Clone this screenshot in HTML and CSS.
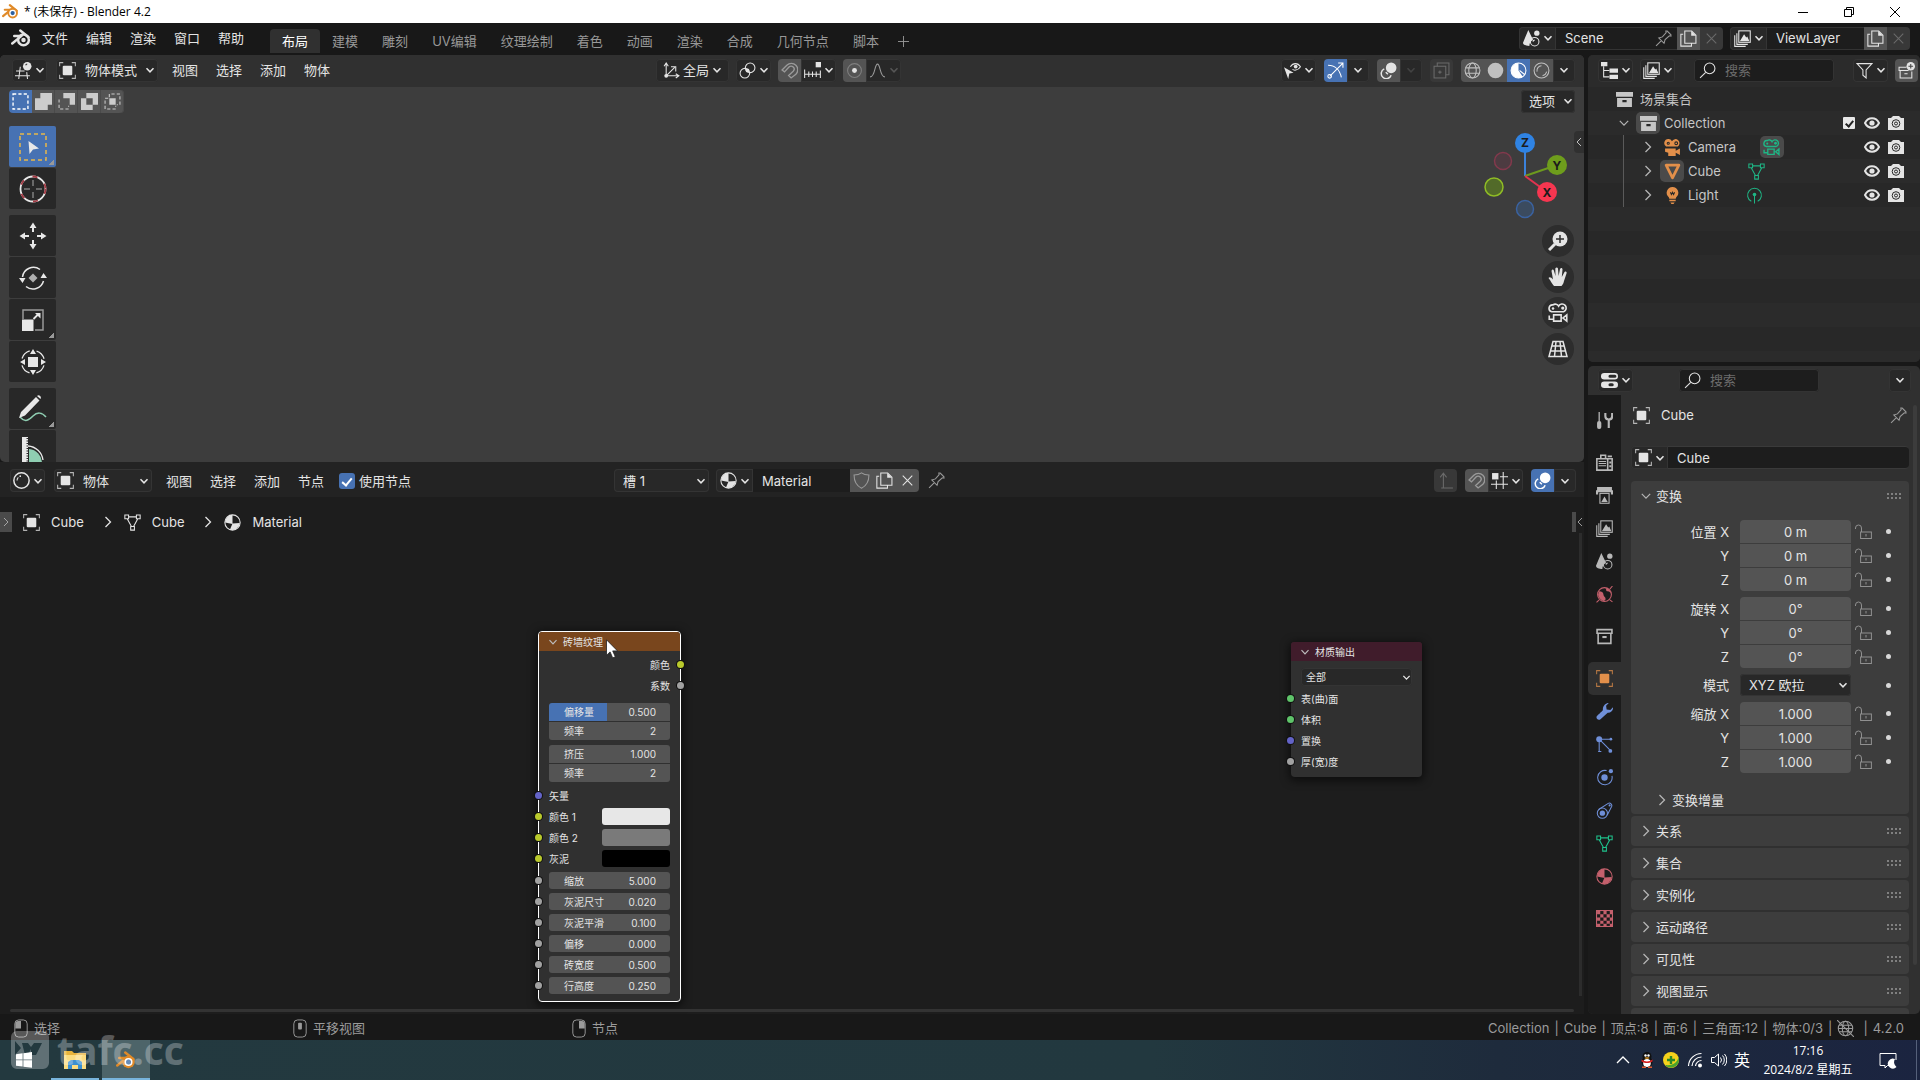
FILE: index.html
```html
<!DOCTYPE html>
<html lang="zh-CN">
<head>
<meta charset="utf-8">
<title>* (未保存) - Blender 4.2</title>
<link rel="stylesheet" href="styles.css">
</head>
<body>
<svg class="sprite" aria-hidden="true">
  <symbol id="logo" viewBox="0 0 16 16"><path d="M1 12.4 8.4 6.3H2.6M7.4 2 14 7.4" fill="none" stroke="currentColor" stroke-width="2" stroke-linecap="round" stroke-linejoin="round"/><circle cx="10" cy="9.5" r="4.3" fill="none" stroke="currentColor" stroke-width="2"/><circle class="f" cx="10" cy="9.5" r="1.8"/></symbol>
  <symbol id="logo-color" viewBox="0 0 16 16"><path d="M1 12.4 8.4 6.3H2.6M7.4 2 14 7.4" fill="none" stroke="#e08a28" stroke-width="2" stroke-linecap="round" stroke-linejoin="round"/><g stroke="none"><circle cx="10" cy="9.5" r="5" fill="#e08a28"/><circle cx="10" cy="9.5" r="3.2" fill="#fff"/><circle cx="10" cy="9.5" r="2" fill="#2c5f9e"/></g></symbol>
  <symbol id="down" viewBox="0 0 10 10"><path d="M1.5 3.2 5 6.8l3.5-3.6"/></symbol>
  <symbol id="right" viewBox="0 0 10 14"><path d="M2.5 2 7.5 7l-5 5"/></symbol>
  <symbol id="left" viewBox="0 0 10 14"><path d="M7.5 2 2.5 7l5 5"/></symbol>
  <symbol id="object" viewBox="0 0 16 16"><path d="M.6 4V.6H4M12 .6h3.4V4M15.4 12v3.4H12M4 15.4H.6V12" opacity=".75"/><rect class="f" x="3.5" y="3.5" width="9" height="9" rx="1"/></symbol>
  <symbol id="view3d" viewBox="0 0 16 16"><path d="M1 8.5h8M0 13h14M5 4.5 3.5 16M11 9.5l.8 6.5"/><circle class="f" cx="11.5" cy="4" r="4"/><path d="M10 3a2 2 0 0 1 1.5-1.2" stroke="#282828"/></symbol>
  <symbol id="shader" viewBox="0 0 16 16"><circle cx="8" cy="8" r="7.2" stroke-width="1.4"/><path d="M3.8 8A4.2 4.2 0 0 1 5 5"/><circle class="f" cx="6.8" cy="3.9" r=".8"/></symbol>
  <symbol id="axes" viewBox="0 0 16 16"><path d="M3 2v11h11M3 13l8-8M1 4l2-3 2 3M12 11l3 2-3 2M7.500 4.500H12V9"/><circle class="f" cx="3" cy="13" r="1.800"/></symbol>
  <symbol id="pivot" viewBox="0 0 16 16"><circle cx="10.500" cy="5.500" r="4.500"/><circle cx="5.500" cy="10.500" r="4.500"/><circle class="f" cx="8" cy="8" r="1.800"/></symbol>
  <symbol id="magnet" viewBox="0 0 16 16"><path d="M1 7.500 5.500 3a6 6 0 0 1 8.500 8.500L9.500 15l-2.300-2.300 4.300-4a2.800 2.800 0 0 0-4-4L3.300 9.300z" stroke-width="1.300"/></symbol>
  <symbol id="snapinc" viewBox="0 0 16 16"><path d="M.6 7v8M15.400 8v7M1 11.500h14M4.500 9v5M8 9v5M11.500 9v5"/><rect class="f" x="11" y="0" width="5" height="5"/></symbol>
  <symbol id="snapgrid" viewBox="0 0 16 16"><path d="M11.500 0v16M5 8v8M8.500 4.500H16M0 11.500h16"/><rect class="f" x="1" y="1" width="6" height="6"/></symbol>
  <symbol id="prop" viewBox="0 0 16 16"><circle cx="8" cy="8" r="6.500" opacity=".3"/><circle class="f" cx="8" cy="8" r="2.300"/></symbol>
  <symbol id="falloff" viewBox="0 0 16 16"><path d="M1 14C6 14 5 2 8 2s2 12 7 12"/></symbol>
  <symbol id="visible" viewBox="0 0 16 16"><path class="f" d="M0 5l9 5-4 .8L4 16z"/><path d="M6 4.500C8.500.5 13 .5 15.500 4.500 13 8.500 9 8 8 6.800"/><circle class="f" cx="11" cy="4.300" r="1.800"/></symbol>
  <symbol id="gizmo" viewBox="0 0 16 16"><path d="M2.500 13.500 15 1M10.500 1H15v4.500M1 3c6 0 11 4 12.500 11.500"/><circle cx="2.500" cy="13.500" r="1.700"/></symbol>
  <symbol id="overlay" viewBox="0 0 16 16"><circle class="f" cx="10.500" cy="5.500" r="5"/><path d="M4 6.500a4.800 4.800 0 1 0 6.500 6M5.500 9.500a5.500 5.500 0 0 0 2 2" stroke-width="1.400"/></symbol>
  <symbol id="xray" viewBox="0 0 16 16"><rect x="1" y="4" width="11" height="11"/><path d="M4 4V1h11v11h-3M5 9.500h3M6.500 8v3"/></symbol>
  <symbol id="wire" viewBox="0 0 16 16"><circle cx="8" cy="8" r="7"/><ellipse cx="8" cy="8" rx="3.500" ry="7"/><path d="M1.500 5.500h13M1.500 10.500h13"/></symbol>
  <symbol id="solid" viewBox="0 0 16 16"><circle class="f" cx="8" cy="8" r="7.300"/></symbol>
  <symbol id="matprev" viewBox="0 0 16 16"><circle cx="8" cy="8" r="7"/><path class="f" d="M8 1a7 7 0 1 0 4 12.800L8 8z"/><path d="M9 8l5 4"/></symbol>
  <symbol id="rendered" viewBox="0 0 16 16"><circle cx="8" cy="8" r="7"/><path d="M3.800 9A4.500 4.500 0 0 1 8 3.500M13 9a6 6 0 0 1-4 4"/></symbol>
  <symbol id="material" viewBox="0 0 16 16"><circle cx="8" cy="8" r="7.200"/><path class="f" d="M8 .8a7.200 7.200 0 0 0-7 7.200l7 1.500zM8 9l6.800-.5a7.200 7.200 0 0 1-9.300 6.300z"/></symbol>
  <symbol id="pin" viewBox="0 0 16 16"><path d="M1 15l5-5M3.500 7.500l5 5 1-3.500 4-3.500 1.500.3V4.500L11.500 1h-1.300l.3 1.500-3.500 4z"/></symbol>
  <symbol id="copy" viewBox="0 0 16 16"><path d="M3 4H.8v11.200h10V13M4.500 1H11l4 4v7.500H4.500z"/><path class="f" d="M10.500 1v4.500H15z"/></symbol>
  <symbol id="close" viewBox="0 0 16 16"><path d="M3.500 3.500l9 9M12.500 3.500l-9 9"/></symbol>
  <symbol id="shield" viewBox="0 0 16 16"><path d="M8 .8c2 1.500 4 2 7 2 0 7-3 10.500-7 12.400C4 13.300 1 9.800 1 2.800c3 0 5-.5 7-2z"/></symbol>
  <symbol id="scene" viewBox="0 0 16 16"><path class="f" d="M5 0l4.500 9.500A6 6 0 0 0 6 15C3 15 0 14 0 12z"/><circle class="f" cx="13" cy="3" r="2.500"/><circle cx="11" cy="11" r="4"/><path d="M9.500 11A1.500 1.500 0 0 1 11 9.500"/></symbol>
  <symbol id="images" viewBox="0 0 16 16"><rect x="4.500" y=".8" width="10.800" height="10.800"/><path d="M2.700 3v10.500H13M.7 5v10.400H11"/><path class="f" d="M5.500 10.500 9.500 4l2 3 1-1 2 4.500z"/></symbol>
  <symbol id="tree" viewBox="0 0 16 16"><path class="f" d="M0 0h6v4H0zM8 6h8v4H8zM8 12h8v4H8z"/><path d="M2.500 4v10H8M2.500 8H8"/></symbol>
  <symbol id="search" viewBox="0 0 16 16"><circle cx="10" cy="6" r="5"/><path d="M6.300 9.700 1 15"/></symbol>
  <symbol id="filter" viewBox="0 0 16 16"><path d="M1 1.500h14l-5.500 6v7.500L6.500 12.500v-5z"/></symbol>
  <symbol id="newcoll" viewBox="0 0 16 16"><path d="M8 5H1v3h9M2 8v7h11V9M6 11h3"/><circle class="f" cx="12" cy="4" r="4"/><path d="M12 1.800v4.400M9.800 4h4.400" stroke="#444"/></symbol>
  <symbol id="coll" viewBox="0 0 16 16"><path class="f" d="M0 1h16v4.500H0zM1 6.500h14V15H1z"/><path d="M6 9.500h4" stroke="#282828" stroke-width="2"/></symbol>
  <symbol id="colllight" viewBox="0 0 16 16"><path d="M1 1.500h14V5H1zM2 5v9.500h12V5" stroke-width="1.500"/><path d="M6 8.500h4" stroke-width="2"/></symbol>
  <symbol id="camera" viewBox="0 0 16 16"><path class="f" d="M4 0a3.800 3.800 0 0 0-2 7h11a3.800 3.800 0 1 0-5.500-5A3.800 3.800 0 0 0 4 0zM3 9h8v2l4-2v6l-4-2v3H4v-3l-3-1V9z"/><circle cx="4" cy="4" r="1" stroke="#282828"/><circle cx="11.500" cy="4" r="1.300" stroke="#282828"/></symbol>
  <symbol id="cameraline" viewBox="0 0 16 16"><path d="M4 1.500a2.800 2.800 0 0 0-1 5.500h9.500a3.200 3.200 0 1 0-4-4.500A3 3 0 0 0 4 1.500zM4.500 9.500h6v5h-6zM15 9.500v5l-3-2.500zM1 10v3h3" stroke-width="1.300"/><circle class="f" cx="4" cy="4.300" r="1"/><circle class="f" cx="11.800" cy="4" r="1.300"/></symbol>
  <symbol id="cone" viewBox="0 0 16 16"><path d="M2 2h12L8 14z" stroke-width="2.600" stroke-linejoin="round"/></symbol>
  <symbol id="mesh" viewBox="0 0 16 16"><path d="M.8 1h3.500v3.500H.8zM11.700 1h3.500v3.500h-3.500zM6.300 11.700h3.500v3.500H6.300zM4.300 2.700h7.400M3 4.500l4 7.200M13 4.500 9 11.700"/></symbol>
  <symbol id="bulb" viewBox="0 0 16 16"><path class="f" d="M8 0a5.500 5.500 0 0 0-3.500 9.700L5 11h6l.5-1.300A5.500 5.500 0 0 0 8 0zM5 12h6v1.500H5zM6 14.500h4L9 16H7z"/><path d="M6 5l1 2 1-2 1 2 1-2" stroke="#282828"/></symbol>
  <symbol id="lightdata" viewBox="0 0 16 16"><path d="M5 13.500A6.500 6.500 0 1 1 11 13.500M8 7.500v8"/><circle class="f" cx="8" cy="7" r="1.700"/></symbol>
  <symbol id="eye" viewBox="0 0 16 16"><path d="M1 8c3-6.200 11-6.200 14 0-3 6.200-11 6.200-14 0z" stroke-width="2"/><circle class="f" cx="8" cy="8" r="2.600"/></symbol>
  <symbol id="photo" viewBox="0 0 16 16"><path class="f" d="M0 3h3l2-2h6l2 2h3v12H0z"/><circle cx="8" cy="8.500" r="3.800" stroke="#282828"/><circle cx="8" cy="8.500" r="1.500" stroke="#282828"/></symbol>
  <symbol id="props" viewBox="0 0 16 16"><rect x="0" y="1" width="16" height="6" rx="3" class="f"/><rect x="0" y="9" width="16" height="6" rx="3" class="f"/><path d="M8.500 4H13M8.500 12h2" stroke="#282828" stroke-width="3" stroke-linecap="round"/></symbol>
  <symbol id="tools" viewBox="0 0 16 16"><path d="M3 0v9" stroke-width="1.200"/><rect class="f" x="1" y="8.500" width="4" height="7.500" rx="1.800"/><path d="M12 7.500V15M8.800 1v3c0 2 1.200 3 3.200 3s3.200-1 3.200-3V1" stroke-width="2"/></symbol>
  <symbol id="render" viewBox="0 0 16 16"><path d="M.8 4.500h14.400v10.700H.8zM4.500 4V1.200h4.500V4M11 4.500v10" stroke-width="1.500"/><path class="f" d="M11 1.500h4V3h-4zM2.500 6.500h7v1H2.500zM2.500 8.500h7v1H2.500zM2.500 10.500h7v1H2.500zM12.500 7h2v2h-2zM12.500 10.500h2v2h-2z"/></symbol>
  <symbol id="printer" viewBox="0 0 16 16"><path class="f" d="M1 0h14v3h1v4h-2V5H2v2H0V3h1z"/><rect x="3.700" y="6" width="8.600" height="9.300"/><path class="f" d="M5 14l3-5 3 5z"/></symbol>
  <symbol id="world" viewBox="0 0 16 16"><circle cx="8" cy="8" r="6.500"/><path class="f" d="M3 5c2 0 4 1 4 3s2 2 2 4-1 2-2 2c-3-1-5-4-5-6zM9 2c1 1 0 3 2 3s2 1 3 2c0-3-2-5-5-5z"/><path d="M13 13l2.500 2M13 3l2.500-3M3 13 .5 15.500"/></symbol>
  <symbol id="wrench" viewBox="0 0 16 16"><path class="f" d="M12 0 9.500 2.500 10 6l3.500.5L16 4c.5 3-2 5.500-5 5.200L4.500 15c-2 2-4.500 0-4-2 .3-1 5-5 6-6.200C6 3 9 0 12 0z"/></symbol>
  <symbol id="particles" viewBox="0 0 16 16"><circle class="f" cx="3" cy="3" r="2.800"/><circle class="f" cx="14" cy="3" r="1.300"/><circle class="f" cx="13.500" cy="14" r="1.800"/><path d="M3 3h10M3 3l10 10M3 3v12M2 14.500h3"/></symbol>
  <symbol id="physics" viewBox="0 0 16 16"><circle class="f" cx="8" cy="8" r="3"/><circle class="f" cx="14" cy="2" r="2"/><path d="M10 1.500a6.800 6.800 0 1 0 5 5"/></symbol>
  <symbol id="constraint" viewBox="0 0 16 16"><circle cx="6" cy="10.500" r="4.800"/><circle class="f" cx="6" cy="10.500" r="2.500"/><path d="M2.500 7 11.500 1.300c2-1 4 1 3.200 3L10.500 12.500"/><circle class="f" cx="12.800" cy="3.200" r="1"/></symbol>
  <symbol id="texture" viewBox="0 0 16 16"><rect x=".5" y=".5" width="15" height="15"/><path class="f" d="M1 1h3v3H1zM7 1h3v3H7zM13 1h3v3h-3zM4 4h3v3H4zM10 4h3v3h-3zM1 7h3v3H1zM7 7h3v3H7zM13 7h3v3h-3zM4 10h3v3H4zM10 10h3v3h-3zM1 13h3v3H1zM7 13h3v3H7zM13 13h3v3h-3z"/></symbol>
  <symbol id="lock" viewBox="0 0 17 16"><rect x="5.600" y="8" width="10.800" height="6.500"/><path d="M6.500 8V4a3 3 0 0 0-6 0v1M11 10v2.500"/></symbol>
  <symbol id="up" viewBox="0 0 16 16"><path d="M4 15h11M6 15V2M3 5l3-4 3 4"/></symbol>
  <symbol id="grip" viewBox="0 0 15 6"><path d="M0 1h15M0 5h15" stroke-width="2" stroke-dasharray="2 2"/></symbol>
  <symbol id="lmb" viewBox="0 0 16 20"><rect x="1.500" y="1" width="13" height="18" rx="4"/><path class="f" d="M8 2v8H2V5a3 3 0 0 1 3-3z"/></symbol>
  <symbol id="mmb" viewBox="0 0 16 20"><rect x="1.500" y="1" width="13" height="18" rx="4"/><rect class="f" x="6" y="4" width="4" height="7" rx="1"/></symbol>
  <symbol id="rmb" viewBox="0 0 16 20"><rect x="1.500" y="1" width="13" height="18" rx="4"/><path class="f" d="M8 2v8h6V5a3 3 0 0 0-3-3z"/></symbol>
  <symbol id="nonet" viewBox="0 0 16 16"><circle cx="8" cy="8" r="6.800"/><ellipse cx="8" cy="8" rx="3" ry="6.800"/><path d="M1 8h14M2 5h12M2 11h12M0 0l16 16"/></symbol>
</svg>

<header class="titlebar">
  <svg class="ic"><use href="#logo-color"/></svg>
  <h1>* (未保存) - Blender 4.2</h1>
  <div class="window-buttons">
    <button aria-label="最小化"><svg viewBox="0 0 10 10"><path d="M0 5.500h10"/></svg></button>
    <button aria-label="还原"><svg viewBox="0 0 10 10"><path d="M.5 2.500h7v7h-7zM2.500 2.500v-2h7v7h-2"/></svg></button>
    <button aria-label="关闭"><svg viewBox="0 0 10 10"><path d="M0 0l10 10M10 0 0 10"/></svg></button>
  </div>
</header>

<nav class="topbar">
  <button class="plain app" aria-label="Blender"><svg class="ic big"><use href="#logo"/></svg></button>
  <div class="menus">
    <button class="plain">文件</button><button class="plain">编辑</button><button class="plain">渲染</button><button class="plain">窗口</button><button class="plain">帮助</button>
  </div>
  <div class="tabs">
    <button class="tab active">布局</button><button class="tab">建模</button><button class="tab">雕刻</button><button class="tab">UV编辑</button><button class="tab">纹理绘制</button><button class="tab">着色</button><button class="tab">动画</button><button class="tab">渲染</button><button class="tab">合成</button><button class="tab">几何节点</button><button class="tab">脚本</button><button class="tab add" aria-label="添加工作区"><svg class="plus" viewBox="0 0 12 12"><path d="M6 0v12M0 6h12"/></svg></button>
  </div>
  <div class="datablocks">
    <div class="idblock scene-id">
      <button class="dd" aria-label="场景"><svg class="ic"><use href="#scene"/></svg><svg class="chev"><use href="#down"/></svg></button>
      <input aria-label="场景名称" value="Scene">
      <button class="inset dim" aria-label="固定"><svg class="ic"><use href="#pin"/></svg></button>
      <button class="btn" aria-label="新建场景"><svg class="ic"><use href="#copy"/></svg></button>
      <button class="btn off" aria-label="删除场景"><svg class="ic"><use href="#close"/></svg></button>
    </div>
    <div class="idblock layer-id">
      <button class="dd" aria-label="视图层"><svg class="ic"><use href="#images"/></svg><svg class="chev"><use href="#down"/></svg></button>
      <input aria-label="视图层名称" value="ViewLayer">
      <button class="btn" aria-label="新建视图层"><svg class="ic"><use href="#copy"/></svg></button>
      <button class="btn off" aria-label="删除视图层"><svg class="ic"><use href="#close"/></svg></button>
    </div>
  </div>
</nav>

<main class="workspace">
  <div class="left">
    <section class="viewport">
      <div class="area-header">
        <div class="group">
          <button class="dd" aria-label="编辑器类型"><svg class="ic"><use href="#view3d"/></svg><svg class="chev"><use href="#down"/></svg></button>
          <label class="select mode"><svg class="ic"><use href="#object"/></svg><select aria-label="模式"><option>物体模式</option></select><svg class="chev"><use href="#down"/></svg></label>
          <div class="menus"><button class="plain">视图</button><button class="plain">选择</button><button class="plain">添加</button><button class="plain">物体</button></div>
        </div>
        <div class="group mid">
          <button class="dd wide" aria-label="变换坐标系"><svg class="ic"><use href="#axes"/></svg><span>全局</span><svg class="chev"><use href="#down"/></svg></button>
          <button class="dd" aria-label="轴心点"><svg class="ic"><use href="#pivot"/></svg><svg class="chev"><use href="#down"/></svg></button>
          <div class="joined"><button class="btn dim" aria-label="吸附"><svg class="ic"><use href="#magnet"/></svg></button><button class="dd" aria-label="吸附到"><svg class="ic"><use href="#snapinc"/></svg><svg class="chev"><use href="#down"/></svg></button></div>
          <div class="joined"><button class="btn" aria-label="衰减编辑"><svg class="ic"><use href="#prop"/></svg></button><button class="dd dim" aria-label="衰减类型"><svg class="ic"><use href="#falloff"/></svg><svg class="chev faint"><use href="#down"/></svg></button></div>
        </div>
        <div class="group end">
          <button class="dd" aria-label="可见性"><svg class="ic"><use href="#visible"/></svg><svg class="chev"><use href="#down"/></svg></button>
          <div class="joined"><button class="btn on" aria-label="Gizmo"><svg class="ic"><use href="#gizmo"/></svg></button><button class="dd tiny" aria-label="Gizmo 选项"><svg class="chev"><use href="#down"/></svg></button></div>
          <div class="joined"><button class="btn" aria-label="叠加层"><svg class="ic"><use href="#overlay"/></svg></button><button class="dd tiny off" aria-label="叠加层选项"><svg class="chev faint"><use href="#down"/></svg></button></div>
          <button class="btn off" aria-label="透视模式"><svg class="ic"><use href="#xray"/></svg></button>
          <div class="joined"><button class="btn soft" aria-label="线框"><svg class="ic"><use href="#wire"/></svg></button><button class="btn soft" aria-label="实体"><svg class="ic"><use href="#solid"/></svg></button><button class="btn on" aria-label="材质预览"><svg class="ic"><use href="#matprev"/></svg></button><button class="btn soft" aria-label="渲染预览"><svg class="ic"><use href="#rendered"/></svg></button><button class="dd tiny" aria-label="着色选项"><svg class="chev"><use href="#down"/></svg></button></div>
        </div>
      </div>
      <div class="tool-settings">
        <div class="joined sel-modes">
          <button class="btn on" aria-label="新建选区"><svg class="ic" viewBox="0 0 16 16"><rect x="1" y="1" width="14" height="14" stroke-dasharray="3 2" stroke-width="1.300"/></svg></button>
          <button class="btn" aria-label="扩展"><svg class="ic" viewBox="0 0 16 16"><path class="f" d="M5 0h11v11h-4v5H0V5h5z"/></svg></button>
          <button class="btn" aria-label="减去"><svg class="ic" viewBox="0 0 16 16"><path class="f" d="M5 0h11v11h-5V5H5z"/><path d="M1 6v9h9v-3" stroke-dasharray="3 2"/></svg></button>
          <button class="btn" aria-label="反转"><svg class="ic" viewBox="0 0 16 16"><path class="f" fill-rule="evenodd" d="M5 0h11v11h-5v5H0V5h5zM5 5v6h6V5z"/></svg></button>
          <button class="btn" aria-label="相交"><svg class="ic" viewBox="0 0 16 16"><path class="f" d="M5 5h6v6H5z"/><path d="M5 4V1h10v10h-3M4 5H1v10h10v-3" stroke-dasharray="3 2"/></svg></button>
        </div>
        <button class="dd options"><span>选项</span><svg class="chev"><use href="#down"/></svg></button>
      </div>
      <div class="view-body">
        <div class="toolbar">
          <button class="tool on corner" aria-label="框选"><svg viewBox="0 0 28 28"><rect x="1" y="1" width="26" height="26" stroke="#e8b84a" stroke-width="1.500" stroke-dasharray="4 3"/><path class="f" d="M9.500 8 20 15.500l-6 1-3.500 4.500z"/></svg></button>
          <button class="tool" aria-label="游标"><svg viewBox="0 0 28 28"><circle cx="14" cy="14" r="12.500" stroke-width="1.800"/><circle cx="14" cy="14" r="12.500" stroke="#a33a44" stroke-width="1.800" stroke-dasharray="5 9.500"/><path d="M14 5v6M14 17v6M5 14h6M17 14h6" stroke="#aaa"/></svg></button>
          <span class="tool-gap"></span>
          <button class="tool" aria-label="移动"><svg viewBox="0 0 28 28"><path class="f" d="M14 .5l3.500 5.500h-7zM14 27.500l3.500-5.500h-7zM.5 14 6 10.500v7zM27.500 14 22 10.500v7z"/><path d="M14 6v4M14 18v4M6 14h4M18 14h4" stroke-width="2"/></svg></button>
          <button class="tool" aria-label="旋转"><svg viewBox="0 0 28 28"><path d="M3.500 13A11 11 0 0 1 21 5.500M24.500 17A11 11 0 0 1 7 22.500" stroke-width="1.500"/><path class="f" d="M0 14h6.500l-3 5zM21.500 14H28l-3.500-5z"/><path class="f" d="M14 9.500l4.500 4.500-4.500 4.500L9.500 14z" opacity=".7"/></svg></button>
          <button class="tool corner" aria-label="缩放"><svg viewBox="0 0 28 28"><path d="M4 13V4h20v20h-8" stroke="#999" stroke-width="1.500"/><path class="f" d="M3 13.500h11.500V25H3zM16 7h5.500v5.500z"/><path d="M14.500 13l5-5" stroke-width="1.800"/></svg></button>
          <button class="tool" aria-label="变换"><svg viewBox="0 0 28 28"><circle cx="14" cy="14" r="11.500" stroke-width="1.300" stroke-dasharray="11 7" stroke-dashoffset="-3.500"/><path class="f" d="M9 9h10v10H9zM14 1l3 5h-6zM14 27l3-5h-6zM1 14l5-3v6zM27 14l-5-3v6z"/></svg></button>
          <span class="tool-gap"></span>
          <button class="tool corner" aria-label="标注"><svg viewBox="0 0 28 28"><path d="M1 22c5 6 9 3 13-1s9-4 13 1" stroke="#8fceb2" stroke-width="1.500"/><path class="f" d="M17 2l3.500 3.500L6 20.500 0 23l2-6zM18 1c2-2 5 1 3.500 3z"/></svg></button>
          <button class="tool" aria-label="测量"><svg viewBox="0 0 28 28"><path class="f" d="M3 0h6v27H3z"/><path d="M9 1v25" stroke="#282828" stroke-width="3" stroke-dasharray="1 1.500"/><path d="M10 12a14 14 0 0 1 13 14H10z" fill="#8fceb2" stroke="none"/><path d="M9 9a16 16 0 0 1 15 14M8 26h20" stroke-width="1.300"/></svg></button>
        </div>
        <div class="view-nav">
          <svg class="axis" viewBox="0 0 84 88" role="img" aria-label="坐标轴">
            <circle cx="19" cy="29" r="8.500" fill="#4d3b41" stroke="#82394c" stroke-width="1.500"/>
            <circle cx="41" cy="77" r="8.500" fill="#3b4b5f" stroke="#3a62a0" stroke-width="1.500"/>
            <circle cx="10" cy="55" r="9" fill="#526a29" stroke="#8fbc25" stroke-width="1.500"/>
            <path d="M41 44V12" stroke="#3b82dc" stroke-width="2"/><path d="M41 44l32-11" stroke="#6d9a1e" stroke-width="2"/><path d="M41 44l22 16" stroke="#e0334f" stroke-width="2"/>
            <circle cx="41" cy="11" r="10" fill="#2f83e3"/><circle cx="73" cy="33" r="10" fill="#6e9d1c"/><circle cx="63" cy="60" r="10" fill="#f73650"/>
            <text x="41" y="15">Z</text><text x="73" y="38">Y</text><text x="63" y="65">X</text>
          </svg>
          <button class="round" aria-label="缩放视图"><svg viewBox="0 0 20 20"><circle class="f" cx="12" cy="8" r="7.500"/><path d="M7 13l-6 6" stroke-width="3"/><path d="M12 4v8M8 8h8" stroke="#2d2d2d" stroke-width="1.500"/></svg></button>
          <button class="round" aria-label="平移视图"><svg viewBox="0 0 20 20"><path class="f" d="M6 19c-2-2-3-5-5.500-8 1-1.500 2.500-1 4.500 1.500L3.500 4C4 2 5.500 2 6 4l1.500 5L7.300 1.500C8 0 9.500 0 10 1.500l.6 7.500 1.400-7C13 .5 14.500 1 14.500 2.500L13.800 10l2.700-5C18 4 19 5 18.500 6.500L16 14c-.5 2-1 3.500-2.500 5z"/></svg></button>
          <button class="round" aria-label="摄像机视角"><svg viewBox="0 0 16 16"><use href="#cameraline"/></svg></button>
          <button class="round" aria-label="透视/正交"><svg viewBox="0 0 20 20"><path d="M5 2.500h10l4 15H1zM8 2.500l-1.500 15M12 2.500l1.500 15M4 7h12M2.500 12h15" stroke-width="1.500"/></svg></button>
        </div>
      </div>
      <button class="flap" aria-label="展开侧栏"><svg><use href="#left"/></svg></button>
    </section>

    <section class="node-editor">
      <div class="area-header">
        <div class="group">
          <button class="dd" aria-label="编辑器类型"><svg class="ic"><use href="#shader"/></svg><svg class="chev"><use href="#down"/></svg></button>
          <label class="select shader-type"><svg class="ic"><use href="#object"/></svg><select aria-label="着色器类型"><option>物体</option></select><svg class="chev"><use href="#down"/></svg></label>
          <div class="menus"><button class="plain">视图</button><button class="plain">选择</button><button class="plain">添加</button><button class="plain">节点</button></div>
          <label class="check"><input type="checkbox" checked>使用节点</label>
        </div>
        <div class="group mid">
          <label class="select slot"><select aria-label="材质槽"><option>槽 1</option></select><svg class="chev"><use href="#down"/></svg></label>
          <div class="idblock mat-id">
            <button class="dd" aria-label="浏览材质"><svg class="ic"><use href="#material"/></svg><svg class="chev"><use href="#down"/></svg></button>
            <input aria-label="材质名称" value="Material">
            <button class="btn dim" aria-label="伪用户"><svg class="ic"><use href="#shield"/></svg></button>
            <button class="btn" aria-label="新建材质"><svg class="ic"><use href="#copy"/></svg></button>
            <button class="btn" aria-label="断开"><svg class="ic"><use href="#close"/></svg></button>
          </div>
          <button class="plain dim" aria-label="固定"><svg class="ic"><use href="#pin"/></svg></button>
        </div>
        <div class="group end">
          <button class="btn off" aria-label="上级节点树"><svg class="ic"><use href="#up"/></svg></button>
          <div class="joined"><button class="btn dim" aria-label="吸附"><svg class="ic"><use href="#magnet"/></svg></button><button class="dd" aria-label="吸附到"><svg class="ic"><use href="#snapgrid"/></svg><svg class="chev"><use href="#down"/></svg></button></div>
          <div class="joined"><button class="btn on" aria-label="叠加层"><svg class="ic"><use href="#overlay"/></svg></button><button class="dd tiny" aria-label="叠加层选项"><svg class="chev"><use href="#down"/></svg></button></div>
        </div>
      </div>
      <div class="canvas">
        <nav class="crumbs">
          <button class="side-flap" aria-label="展开工具栏"><svg><use href="#right"/></svg></button>
          <span class="crumb"><svg class="ic"><use href="#object"/></svg>Cube</span>
          <svg class="sep"><use href="#right"/></svg>
          <span class="crumb"><svg class="ic"><use href="#mesh"/></svg>Cube</span>
          <svg class="sep"><use href="#right"/></svg>
          <span class="crumb"><svg class="ic"><use href="#material"/></svg>Material</span>
          <button class="side-flap end-flap" aria-label="展开侧栏"><svg><use href="#left"/></svg></button>
        </nav>

        <article class="node brick">
          <h2><svg class="chev"><use href="#down"/></svg>砖墙纹理</h2>
          <div class="node-body">
            <p class="row out">颜色<i class="socket yellow"></i></p>
            <p class="row out">系数<i class="socket gray"></i></p>
            <div class="stack first">
              <label class="num slider"><span>偏移量</span><input value="0.500"></label>
              <label class="num"><span>频率</span><input value="2"></label>
            </div>
            <div class="stack">
              <label class="num"><span>挤压</span><input value="1.000"></label>
              <label class="num"><span>频率</span><input value="2"></label>
            </div>
            <div class="inputs">
              <p class="row"><i class="socket purple"></i>矢量</p>
              <p class="row"><i class="socket yellow"></i>颜色 1<button class="swatch white" aria-label="颜色 1"></button></p>
              <p class="row"><i class="socket yellow"></i>颜色 2<button class="swatch grey" aria-label="颜色 2"></button></p>
              <p class="row"><i class="socket yellow"></i>灰泥<button class="swatch black" aria-label="灰泥"></button></p>
            </div>
            <div class="inputs values">
              <div class="row"><i class="socket gray"></i><label class="num"><span>缩放</span><input value="5.000"></label></div>
              <div class="row"><i class="socket gray"></i><label class="num"><span>灰泥尺寸</span><input value="0.020"></label></div>
              <div class="row"><i class="socket gray"></i><label class="num"><span>灰泥平滑</span><input value="0.100"></label></div>
              <div class="row"><i class="socket gray"></i><label class="num"><span>偏移</span><input value="0.000"></label></div>
              <div class="row"><i class="socket gray"></i><label class="num"><span>砖宽度</span><input value="0.500"></label></div>
              <div class="row"><i class="socket gray"></i><label class="num"><span>行高度</span><input value="0.250"></label></div>
            </div>
          </div>
        </article>

        <article class="node output">
          <h2><svg class="chev"><use href="#down"/></svg>材质输出</h2>
          <div class="node-body">
            <label class="select target"><select aria-label="目标"><option>全部</option></select><svg class="chev"><use href="#down"/></svg></label>
            <p class="row"><i class="socket green"></i>表(曲)面</p>
            <p class="row"><i class="socket green"></i>体积</p>
            <p class="row"><i class="socket purple"></i>置换</p>
            <p class="row"><i class="socket gray"></i>厚(宽)度</p>
          </div>
        </article>
        <svg class="pointer" viewBox="0 0 12 20"><path d="M.5.8v15.500l3.600-3.400 2.600 6 2.600-1.200-2.600-5.800h4.800z" fill="#fff" stroke="#222" stroke-width=".8"/></svg>
        <div class="vscroll"></div>
        <div class="hscroll"></div>
      </div>
    </section>
  </div>

  <aside class="right">
    <section class="outliner">
      <div class="area-header">
        <button class="dd" aria-label="编辑器类型"><svg class="ic"><use href="#tree"/></svg><svg class="chev"><use href="#down"/></svg></button>
        <button class="dd" aria-label="显示模式"><svg class="ic"><use href="#images"/></svg><svg class="chev"><use href="#down"/></svg></button>
        <label class="search"><svg class="ic"><use href="#search"/></svg><input type="text" placeholder="搜索" aria-label="搜索"></label>
        <button class="dd" aria-label="过滤"><svg class="ic"><use href="#filter"/></svg><svg class="chev"><use href="#down"/></svg></button>
        <button class="btn" aria-label="新建集合"><svg class="ic"><use href="#newcoll"/></svg></button>
      </div>
      <div class="tree">
        <div class="item"><span class="slot24"><svg class="ic"><use href="#coll"/></svg></span><span class="name">场景集合</span></div>
        <div class="item"><span class="slot24"><svg class="fold"><use href="#down"/></svg></span><span class="slot24 lit"><svg class="ic"><use href="#coll"/></svg></span><span class="name">Collection</span>
          <span class="toggles"><input type="checkbox" class="tick" checked aria-label="包含集合"><span class="slot24"><svg class="ic"><use href="#eye"/></svg></span><span class="slot24"><svg class="ic"><use href="#photo"/></svg></span></span></div>
        <div class="item child"><span class="slot24"><svg class="open"><use href="#right"/></svg></span><span class="slot24 orange"><svg class="ic"><use href="#camera"/></svg></span><span class="name">Camera</span><span class="slot24 data lit"><svg class="ic"><use href="#cameraline"/></svg></span>
          <span class="toggles"><span class="slot24"><svg class="ic"><use href="#eye"/></svg></span><span class="slot24"><svg class="ic"><use href="#photo"/></svg></span></span></div>
        <div class="item child"><span class="slot24"><svg class="open"><use href="#right"/></svg></span><span class="slot24 orange lit"><svg class="ic"><use href="#cone"/></svg></span><span class="name">Cube</span><span class="slot24 data"><svg class="ic"><use href="#mesh"/></svg></span>
          <span class="toggles"><span class="slot24"><svg class="ic"><use href="#eye"/></svg></span><span class="slot24"><svg class="ic"><use href="#photo"/></svg></span></span></div>
        <div class="item child"><span class="slot24"><svg class="open"><use href="#right"/></svg></span><span class="slot24 orange"><svg class="ic"><use href="#bulb"/></svg></span><span class="name">Light</span><span class="slot24 data"><svg class="ic"><use href="#lightdata"/></svg></span>
          <span class="toggles"><span class="slot24"><svg class="ic"><use href="#eye"/></svg></span><span class="slot24"><svg class="ic"><use href="#photo"/></svg></span></span></div>
      </div>
    </section>

    <section class="properties">
      <div class="area-header">
        <button class="dd" aria-label="编辑器类型"><svg class="ic"><use href="#props"/></svg><svg class="chev"><use href="#down"/></svg></button>
        <label class="search"><svg class="ic"><use href="#search"/></svg><input type="text" placeholder="搜索" aria-label="搜索属性"></label>
        <button class="dd tiny" aria-label="选项"><svg class="chev"><use href="#down"/></svg></button>
      </div>
      <div class="props-body">
        <div class="prop-tabs">
          <div><button aria-label="工具"><svg class="ic"><use href="#tools"/></svg></button></div>
          <div><button aria-label="渲染"><svg class="ic"><use href="#render"/></svg></button><button aria-label="输出"><svg class="ic"><use href="#printer"/></svg></button><button aria-label="视图层"><svg class="ic"><use href="#images"/></svg></button><button aria-label="场景"><svg class="ic"><use href="#scene"/></svg></button><button class="rose" aria-label="世界"><svg class="ic"><use href="#world"/></svg></button></div>
          <div><button aria-label="集合"><svg class="ic"><use href="#colllight"/></svg></button></div>
          <div><button class="orange active" aria-label="物体"><svg class="ic"><use href="#object"/></svg></button><button class="blue" aria-label="修改器"><svg class="ic"><use href="#wrench"/></svg></button><button class="blue" aria-label="粒子"><svg class="ic"><use href="#particles"/></svg></button><button class="blue" aria-label="物理"><svg class="ic"><use href="#physics"/></svg></button><button class="blue" aria-label="约束"><svg class="ic"><use href="#constraint"/></svg></button><button class="green" aria-label="数据"><svg class="ic"><use href="#mesh"/></svg></button><button class="rose" aria-label="材质"><svg class="ic"><use href="#material"/></svg></button></div>
          <div><button class="rose" aria-label="纹理"><svg class="ic"><use href="#texture"/></svg></button></div>
        </div>
        <div class="props-main">
          <div class="context"><svg class="ic"><use href="#object"/></svg><span>Cube</span><button class="plain dim" aria-label="固定"><svg class="ic"><use href="#pin"/></svg></button></div>
          <div class="idblock obj-id"><button class="dd" aria-label="浏览物体"><svg class="ic"><use href="#object"/></svg><svg class="chev"><use href="#down"/></svg></button><input aria-label="物体名称" value="Cube"></div>
          <section class="panel">
            <button class="panel-head"><svg class="fold"><use href="#down"/></svg>变换<svg class="grip"><use href="#grip"/></svg></button>
            <div class="fields">
              <div class="vec">
                <label for="lx">位置 X</label><input id="lx" value="0 m"><svg class="lock"><use href="#lock"/></svg><i class="dot"></i>
                <label for="ly">Y</label><input id="ly" value="0 m"><svg class="lock"><use href="#lock"/></svg><i class="dot"></i>
                <label for="lz">Z</label><input id="lz" value="0 m"><svg class="lock"><use href="#lock"/></svg><i class="dot"></i>
              </div>
              <div class="vec">
                <label for="rx">旋转 X</label><input id="rx" value="0°"><svg class="lock"><use href="#lock"/></svg><i class="dot"></i>
                <label for="ry">Y</label><input id="ry" value="0°"><svg class="lock"><use href="#lock"/></svg><i class="dot"></i>
                <label for="rz">Z</label><input id="rz" value="0°"><svg class="lock"><use href="#lock"/></svg><i class="dot"></i>
              </div>
              <div class="vec single">
                <label for="rm">模式</label><span class="select"><select id="rm"><option>XYZ 欧拉</option></select><svg class="chev"><use href="#down"/></svg></span><span></span><i class="dot"></i>
              </div>
              <div class="vec">
                <label for="sx">缩放 X</label><input id="sx" value="1.000"><svg class="lock"><use href="#lock"/></svg><i class="dot"></i>
                <label for="sy">Y</label><input id="sy" value="1.000"><svg class="lock"><use href="#lock"/></svg><i class="dot"></i>
                <label for="sz">Z</label><input id="sz" value="1.000"><svg class="lock"><use href="#lock"/></svg><i class="dot"></i>
              </div>
            </div>
            <button class="panel-head sub"><svg class="open"><use href="#right"/></svg>变换增量</button>
          </section>
          <section class="panel"><button class="panel-head"><svg class="open"><use href="#right"/></svg>关系<svg class="grip"><use href="#grip"/></svg></button></section>
          <section class="panel"><button class="panel-head"><svg class="open"><use href="#right"/></svg>集合<svg class="grip"><use href="#grip"/></svg></button></section>
          <section class="panel"><button class="panel-head"><svg class="open"><use href="#right"/></svg>实例化<svg class="grip"><use href="#grip"/></svg></button></section>
          <section class="panel"><button class="panel-head"><svg class="open"><use href="#right"/></svg>运动路径<svg class="grip"><use href="#grip"/></svg></button></section>
          <section class="panel"><button class="panel-head"><svg class="open"><use href="#right"/></svg>可见性<svg class="grip"><use href="#grip"/></svg></button></section>
          <section class="panel"><button class="panel-head"><svg class="open"><use href="#right"/></svg>视图显示<svg class="grip"><use href="#grip"/></svg></button></section>
          <section class="panel rest"></section>
        </div>
        <div class="pscroll"></div>
      </div>
    </section>
  </aside>
</main>

<footer class="statusbar">
  <span class="hint"><svg class="mouse"><use href="#lmb"/></svg>选择</span>
  <span class="hint"><svg class="mouse"><use href="#mmb"/></svg>平移视图</span>
  <span class="hint"><svg class="mouse"><use href="#rmb"/></svg>节点</span>
  <div class="stats"><span>Collection</span><span>|</span><span>Cube</span><span>|</span><span>顶点:8</span><span>|</span><span>面:6</span><span>|</span><span>三角面:12</span><span>|</span><span>物体:0/3</span><span>|</span><svg class="ic"><use href="#nonet"/></svg><span class="last">|</span><span>4.2.0</span></div>
</footer>

<footer class="taskbar">
  <button class="task" aria-label="开始"><svg viewBox="0 0 16 16"><path fill="#fff" d="M0 2.200 6.600 1.300v6.200H0zM7.400 1.200 16 0v7.500H7.400zM0 8.300h6.600v6.300L0 13.700zM7.400 8.300H16v7.500l-8.600-1.100z"/></svg></button>
  <button class="task running" aria-label="文件资源管理器"><svg class="wide" viewBox="0 0 22 18"><path fill="#e8b33c" d="M0 0h8l2 2h12v16H0z"/><path fill="#fbdc80" d="M0 4h22v14H0z"/><path fill="#3b8fd0" d="M4 18v-7l3-2h8l3 2v7h-4v-4H8v4z"/></svg></button>
  <button class="task running current" aria-label="Blender"><svg class="wide" viewBox="0 0 16 16"><use href="#logo-color"/></svg></button>
  <div class="tray">
    <button aria-label="显示隐藏的图标"><svg viewBox="0 0 16 16"><path d="M2 11l6-6 6 6" stroke-width="1.300"/></svg></button>
    <button aria-label="QQ"><svg viewBox="0 0 16 16"><g stroke="none"><ellipse cx="8" cy="10" rx="5.500" ry="5.500" fill="#111"/><circle cx="8" cy="4.500" r="4.500" fill="#111"/><ellipse cx="8" cy="11" rx="3.800" ry="4" fill="#fff"/><circle cx="6.500" cy="3.500" r="1.200" fill="#fff"/><circle cx="9.500" cy="3.500" r="1.200" fill="#fff"/><ellipse cx="8" cy="6" rx="2.500" ry=".8" fill="#f0a020"/><path d="M2.500 7.500c4 2.500 7 2.500 11 0v2c-4 2-7 2-11 0z" fill="#d32020"/></g><path d="M3 15.300h4M9 15.300h4" stroke="#e05a30" stroke-width="1.500"/></svg></button>
    <button aria-label="安全卫士"><svg viewBox="0 0 16 16"><g stroke="none"><circle cx="8" cy="8" r="8" fill="#f5d21c"/><path d="M2 13A8 8 0 0 0 15.500 5c-1 5-5 9-13.500 8z" fill="#4aa52c"/></g><path d="M8 4v8M4 8h8" stroke="#2b8a27" stroke-width="2.400"/></svg></button>
    <button aria-label="网络"><svg viewBox="0 0 16 16"><path d="M1.500 14A13 13 0 0 1 14.500 1.500M5 14a9.500 9.500 0 0 1 9.500-9M8.500 14a6 6 0 0 1 6-5.500" stroke-width="1.200"/><circle class="f" cx="13" cy="13.500" r="2"/></svg></button>
    <button aria-label="音量"><svg viewBox="0 0 16 16"><path d="M.5 5.500h3l4-3.500v12l-4-3.500h-3zM9.500 5.500a4 4 0 0 1 0 5M11.500 3.500a6.500 6.500 0 0 1 0 9M13.500 2a9 9 0 0 1 0 12"/></svg></button>
    <button class="ime">英</button>
    <button class="clock"><time>17:16</time><time>2024/8/2 星期五</time></button>
    <button class="notice" aria-label="通知"><svg viewBox="0 0 18 18"><path d="M10 14.500H8.500L6 17v-2.500H1v-12h16V9"/><path class="f" d="M16 8a5 5 0 1 0 1.500 8A6 6 0 0 1 16 8z"/></svg></button>
  </div>
  <div class="watermark" aria-hidden="true"><svg viewBox="0 0 38 38"><path fill-rule="evenodd" d="M6 0h26a6 6 0 0 1 6 6v26a6 6 0 0 1-6 6H6a6 6 0 0 1-6-6V6a6 6 0 0 1 6-6zM4 10l6 7-6 7zM11 12h6l3 4 3-4h8l-6 12h-5v-6l-3 6h-3z"/></svg><span>tafc.cc</span></div>
</footer>
</body>
</html>
```

FILE: styles.css
```css
* { box-sizing: border-box; }

html, body { height: 100%; }

body {
  margin: 0;
  display: flex;
  flex-direction: column;
  overflow: hidden;
  background: #181818;
  color: #e4e4e4;
  font: 13px/18px Inter, "Noto Sans CJK SC", sans-serif;
}

button, input, select { font: inherit; color: inherit; margin: 0; }
button { border: 0; padding: 0; background: none; display: inline-flex; align-items: center; justify-content: center; }
input, select { border: 0; outline: 0; min-width: 0; padding: 0; background: none; }
select { appearance: none; }
h1, h2, p { margin: 0; font: inherit; }

svg { fill: none; stroke: currentColor; flex: none; }
.f { fill: currentColor; stroke: none; }
.sprite { display: none; }
.ic { width: 17px; height: 17px; }
.big { width: 20px; height: 20px; }
.chev { width: 10px; height: 10px; stroke-width: 1.5; }
.open, .fold { width: 12px; height: 14px; stroke-width: 1.3; color: #b5b5b5; }
.fold { stroke-width: 1; }
.dim { color: #9a9a9a; }
.off { color: #6a6a6a; }
.faint { opacity: .4; }
.orange { color: #e28f4a; }
.blue { color: #6f8fd8; }
.green { color: #1fc28c; }
.rose { color: #c4606c; }

/* window title */
.titlebar {
  flex: 0 0 23px;
  display: flex;
  align-items: center;
  gap: 5px;
  padding: 0 2px;
  background: #fff;
  color: #000;
}
.titlebar h1 { flex: 1; font: 12px/18px "Open Sans", "Noto Sans CJK SC", sans-serif; }
.window-buttons { display: flex; }
.window-buttons button { width: 46px; height: 22px; }
.window-buttons svg { width: 10px; height: 10px; }

/* top bar */
.topbar { flex: 0 0 32px; display: flex; align-items: center; padding: 0 10px 2px 11px; }
.app { margin-right: 11px; }
.menus { display: flex; gap: 18px; }
.tabs { display: flex; align-self: flex-end; margin-left: 26px; }
.tab { height: 24px; padding: 0 12px; border-radius: 4px 4px 0 0; color: #989898; }
.tab.active { background: #303030; color: #fff; }
.tab.add { padding: 0 7px; }
.plus { width: 11px; height: 11px; }
.datablocks { display: flex; gap: 7px; margin-left: auto; }

/* shared controls */
.dd, .btn, .inset {
  height: 23px;
  border-radius: 4px;
}
.dd { gap: 3px; padding: 0 2px; background: #282828; min-width: 35px; box-shadow: inset 0 0 0 1px #343434; }
.dd.tiny { min-width: 22px; }
.dd.wide { width: 73px; }
.btn { width: 23px; background: #545454; }
.btn.off { background: #383838; }
.btn.on { background: #4772b3; color: #fff; }
.btn.soft { color: #c0c0c0; }
.joined { display: flex; }
.joined > * { border-radius: 0; }
.joined > :first-child, .idblock > :first-child { border-radius: 4px 0 0 4px; }
.joined > :last-child, .idblock > :last-child { border-radius: 0 4px 4px 0; }

.select {
  height: 23px;
  display: grid;
  grid-template-columns: auto 1fr;
  align-items: center;
  background: #282828;
  border-radius: 4px;
  box-shadow: inset 0 0 0 1px #343434;
}
.select > * { grid-row: 1; }
.select > .ic { grid-column: 1; margin-left: 3px; }
.select > select { grid-column: 2; width: 100%; height: 100%; padding-left: 9px; }
.select > .chev { grid-column: 2; justify-self: end; margin-right: 3px; pointer-events: none; }

.idblock { display: flex; height: 23px; }
.idblock > * { border-radius: 0; }
.idblock > .dd { min-width: 37px; }
.idblock > input { flex: 1; background: #1d1d1d; padding-left: 9px; }
.scene-id { width: 204px; }
.scene-id input { border-top: 1px solid #333; border-bottom: 1px solid #333; }
.scene-id .inset { width: 27px; background: #1d1d1d; border-radius: 0; border: solid #333; border-width: 1px 0; }
.layer-id { width: 180px; }
.layer-id input { border-top: 1px solid #333; border-bottom: 1px solid #333; }
.mat-id { width: 203px; }

.area-header { display: flex; align-items: center; flex: none; height: 32px; }
.group { display: flex; align-items: center; gap: 8px; }
.group:first-child { gap: 9px; }
.group .menus { margin-left: 5px; }
.group.mid { gap: 7px; }
.group.end { margin-left: auto; }

/* areas */
.workspace { flex: 1; min-height: 0; display: flex; gap: 4px; }
.left { flex: 1; min-width: 0; display: grid; grid-template-rows: minmax(0, 407fr) minmax(0, 552fr); }
.right { flex: 0 0 332px; display: grid; grid-template-rows: minmax(0, 307fr) minmax(0, 648fr); gap: 4px; }

.viewport {
  position: relative;
  display: flex;
  flex-direction: column;
  overflow: hidden;
  background: #3d3d3d;
  border-radius: 5px;
}
.viewport .area-header { background: #303030; padding: 0 9px 2px 12px; }
.viewport .mode { width: 102px; }
.viewport .group:first-child { flex: 0 0 644px; }
.tool-settings { flex: 0 0 28px; display: flex; justify-content: space-between; align-items: center; padding: 0 9px; }
.sel-modes .btn { color: #ccc; box-shadow: inset -1px 0 0 #4a4a4a; }
.sel-modes .btn.on { color: #fff; box-shadow: none; }
.options { width: 54px; gap: 8px; justify-content: flex-end; }
.view-body { flex: 1; min-height: 0; display: flex; justify-content: space-between; align-items: flex-start; padding: 11px 10px 0 9px; }
.toolbar { display: flex; flex-direction: column; gap: 1px; }
.tool { width: 47px; height: 41px; background: #282828; border-radius: 2px; color: #e8e8e8; }
.tool svg { width: 28px; height: 28px; }
.tool.on { background: #4772b3; }
.tool.corner { background-image: linear-gradient(135deg, transparent 50%, #999 50%); background-size: 5px 5px; background-position: 40px 34px; background-repeat: no-repeat; }
.tool-gap { height: 4px; }
.view-nav { display: flex; flex-direction: column; align-items: flex-end; gap: 4px; padding-top: 6px; }
.axis { width: 84px; height: 88px; margin: 0 6px 1px 0; stroke: none; }
.axis text { font-size: 12px; font-weight: 700; text-anchor: middle; fill: #1b1b1b; }
.round { width: 32px; height: 32px; border-radius: 50%; background: #2d2d2d; }
.round svg { width: 20px; height: 20px; }
.flap { position: absolute; right: 0; top: 76px; width: 10px; height: 22px; background: #303030; border-radius: 4px 0 0 4px; }
.flap svg { width: 8px; height: 12px; }

/* node editor */
.node-editor { display: flex; flex-direction: column; min-height: 0; }
.node-editor .area-header { height: 35px; padding: 2px 8px 0 10px; background: #232323; }
.node-editor .group:first-child { flex: 0 0 604px; }
.shader-type { width: 98px; }
.check { display: flex; align-items: center; gap: 4px; margin-left: 6px; }
.check input, .tick { appearance: none; width: 16px; height: 16px; border-radius: 3px; background: #4772b3; display: grid; place-items: center; }
.check input::after, .tick::after { content: ""; width: 4px; height: 8px; border: solid #fff; border-width: 0 2px 2px 0; transform: rotate(40deg); }
.slot { width: 95px; }
.mid .plain { margin-left: 2px; }

.canvas { position: relative; flex: 1; min-height: 0; overflow: hidden; background: #1d1d1d; }
.crumbs { display: flex; align-items: center; height: 20px; margin-top: 15px; }
.crumb { display: flex; align-items: center; gap: 11px; }
.side-flap { width: 12px; height: 20px; margin-right: 11px; background: #4a4a4a; color: #bbb; }
.side-flap svg { width: 8px; height: 12px; }
.end-flap { margin: 0 0 0 auto; background: none; border-left: 4px solid #4a4a4a; }
.sep { width: 10px; height: 14px; margin: 0 11px 0 19px; stroke-width: 1.3; }

.node {
  position: absolute;
  background: #303030;
  border-radius: 4px;
  box-shadow: 0 2px 8px 2px rgba(0, 0, 0, .55);
  font-size: 10px;
  line-height: 14px;
}
.node h2 { display: flex; align-items: center; gap: 5px; height: 19px; padding-left: 9px; border-radius: 3px 3px 0 0; }
.node h2 .chev { width: 10px; color: #bdbdbd; stroke-width: 1.2; }
.node-body { padding: 3px 10px 5px; }
.brick { left: 538px; top: 134px; width: 143px; border: 1px solid #fff; }
.brick h2 { background: #79461d; }
.output { left: 1291px; top: 145px; width: 131px; }
.output h2 { background: #401c2b; }
.row { position: relative; display: flex; align-items: center; height: 21px; }
.row.out { justify-content: flex-end; }
.socket { position: absolute; left: -14px; width: 7px; height: 7px; border-radius: 50%; box-shadow: 0 0 0 1px #111; }
.out .socket { left: auto; right: -14px; }
.yellow { background: #b9c92c; }
.gray { background: #a1a1a1; }
.purple { background: #6363c7; }
.socket.green { background: #5fc46a; }
.stack { display: grid; gap: 1px; margin-bottom: 5px; border-radius: 3px; overflow: hidden; }
.stack.first { margin-top: 7px; }
.stack .num { height: 18px; border-radius: 0; }
.inputs { margin-top: -2px; }
.values { margin-top: 1px; }
.num { flex: 1; display: flex; justify-content: space-between; align-items: center; height: 17px; padding: 0 14px 0 15px; border-radius: 3px; background: #545454; }
.num input { width: 44px; text-align: right; }
.slider { background: linear-gradient(90deg, #4772b3 48%, #545454 48%); }
.swatch { width: 68px; height: 17px; margin-left: auto; border-radius: 3px; }
.white { background: #e7e7e7; }
.grey { background: #7a7a7a; }
.black { background: #000; }
.node .target { height: 18px; margin: 4px 0 2px; }
.target select { padding-left: 5px; }
.node .target .chev { width: 9px; height: 9px; margin-right: 1px; }
.pointer { position: absolute; left: 606px; top: 142px; width: 12px; height: 20px; }
.vscroll { position: absolute; right: 2px; top: 36px; bottom: 18px; width: 3px; background: #2c2c2c; }
.hscroll { position: absolute; left: 10px; right: 10px; bottom: 2px; height: 3px; background: #333; border-radius: 2px; }

/* outliner */
.outliner { display: flex; flex-direction: column; min-height: 0; background: #282828; border-radius: 5px; overflow: hidden; }
.outliner .area-header { gap: 7px; padding: 0 0 2px 10px; background: #2b2b2b; }
.search { display: flex; align-items: center; gap: 9px; flex: 0 1 140px; height: 23px; margin: 0 12px; padding-left: 5px; background: #1d1d1d; border-radius: 4px; box-shadow: inset 0 0 0 1px #333; }
.search input { width: 90px; }
.search input::placeholder { color: #6c6c6c; opacity: 1; }
.tree { flex: 1; background: repeating-linear-gradient(#282828 0 24px, #2b2b2b 24px 48px); }
.item { display: flex; align-items: center; height: 24px; padding: 0 12px 0 24px; color: #c6c6c6; }
.item.child { padding-left: 35px; }
.child::before { content: ""; width: 1px; height: 100%; margin-right: 12px; background: #5a5a5a; }
.slot24 { display: grid; place-items: center; width: 24px; height: 22px; }
.lit { background: #4a4a4a; border-radius: 5px; }
.name { margin-left: 4px; }
.data { margin-left: 24px; color: #1fb585; }
.toggles { display: flex; align-items: center; margin-left: auto; color: #e4e4e4; }
.toggles .ic { width: 16px; height: 16px; }
.tick { width: 12px; height: 12px; margin-right: 5px; border-radius: 1px; background: #e8e8e8; }
.tick::after { width: 3px; height: 6px; border-color: #222; }

/* properties */
.properties { display: flex; flex-direction: column; min-height: 0; background: #303030; border-radius: 5px; overflow: hidden; }
.properties .area-header { height: 29px; padding: 0 9px 1px 10px; }
.properties .search { margin: 0 auto 0 46px; }
.props-body { flex: 1; min-height: 0; display: flex; }
.prop-tabs { flex: 0 0 33px; display: flex; flex-direction: column; gap: 9px; padding-top: 9px; background: #1b1b1b; color: #b8b8b8; }
.prop-tabs button { display: flex; width: 33px; height: 33px; }
.prop-tabs .active { background: #303030; border-radius: 5px 0 0 5px; }
.props-main { flex: 1; min-width: 0; padding: 0 0 0 10px; overflow: hidden; }
.context { display: flex; align-items: center; gap: 11px; height: 40px; padding: 0 2px; }
.context button { margin-left: auto; }
.obj-id { margin: 11px 0 12px; }
.obj-id input { border: solid #3a3a3a; border-width: 1px 0; }
.panel { margin-bottom: 2px; background: #3d3d3d; border-radius: 4px; }
.panel-head { display: flex; justify-content: flex-start; gap: 4px; width: 100%; height: 30px; padding: 0 7px 0 9px; }
.grip { width: 15px; height: 6px; margin-left: auto; color: #808080; }
.fields { display: grid; gap: 6px; padding: 9px 18px 12px 0; }
.vec { display: grid; grid-template-columns: 109px 1fr 21px 19px; grid-auto-rows: 23px; row-gap: 1px; align-items: center; }
.vec label { justify-self: end; margin-right: 11px; }
.vec input { height: 23px; text-align: center; background: #545454; }
.vec input:first-of-type { border-radius: 4px 4px 0 0; }
.vec input:last-of-type { border-radius: 0 0 4px 4px; }
.vec .select { height: 22px; }
.single { grid-auto-rows: 22px; }
.lock { width: 17px; height: 16px; justify-self: end; color: #909090; }
.dot { width: 5px; height: 5px; justify-self: end; border-radius: 50%; background: #d8d8d8; }
.panel-head.sub { height: 29px; padding-left: 25px; }
.rest { height: 12px; }
.pscroll { flex: 0 0 4px; height: 560px; margin: 10px 3px 0 4px; border-radius: 2px; background: #3c3c3c; }

/* status bar */
.statusbar { flex: 0 0 26px; display: flex; align-items: center; padding: 2px 16px 0 13px; color: #9b9b9b; }
.hint { display: flex; align-items: center; gap: 5px; flex: 0 0 279px; }
.mouse { width: 16px; height: 19px; }
.stats { display: flex; align-items: center; gap: 5px; margin-left: auto; }
.last { margin-left: 4px; }

/* task bar */
.taskbar { position: relative; flex: 0 0 40px; display: flex; gap: 3px; background: linear-gradient(90deg, #23393f 0%, #22383f 60%, #1e2b3c 78%, #1b2440 100%); color: #fff; }
.task { width: 48px; height: 40px; }
.task svg { width: 16px; height: 16px; stroke: none; }
.task .wide { width: 22px; height: 20px; }
.running { border-bottom: 2px solid #78b4dc; padding-top: 2px; }
.current { background: #4d6469; }
.tray { display: flex; align-items: center; margin-left: auto; padding-right: 3px; }
.tray button { width: 24px; height: 40px; }
.tray svg { width: 16px; height: 16px; }
.tray .ime { width: 22px; font-size: 16px; }
.tray .clock { width: 110px; flex-direction: column; font: 12px/19px "Open Sans", "Noto Sans CJK SC", sans-serif; }
.tray .notice { width: 54px; padding-right: 4px; border-right: 1px solid #55607a; }
.tray .notice svg { width: 18px; height: 18px; }
.watermark { position: absolute; left: 11px; top: -9px; display: flex; align-items: center; gap: 8px; color: #fff; opacity: .28; pointer-events: none; font: 700 39px/38px "Open Sans", sans-serif; }
.watermark svg { width: 38px; height: 38px; fill: currentColor; stroke: none; }
```
